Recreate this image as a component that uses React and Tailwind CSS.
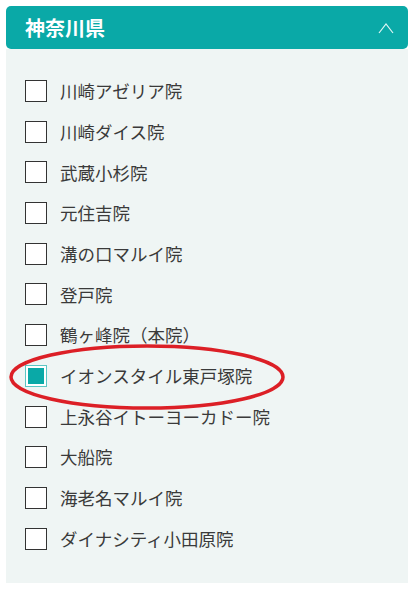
import React, { useState } from 'react';

const CLINICS = [
  '川崎アゼリア院',
  '川崎ダイス院',
  '武蔵小杉院',
  '元住吉院',
  '溝の口マルイ院',
  '登戸院',
  '鶴ヶ峰院（本院）',
  'イオンスタイル東戸塚院',
  '上永谷イトーヨーカドー院',
  '大船院',
  '海老名マルイ院',
  'ダイナシティ小田原院',
];

const CheckBox = ({ checked }) =>
  checked ? (
    <span className="w-[22px] h-[22px] border border-[#5cc6c4] bg-white p-[2px] shrink-0">
      <span className="block w-full h-full bg-[#0aa9a7]" />
    </span>
  ) : (
    <span className="w-[22px] h-[22px] border border-[#333] bg-white shrink-0" />
  );

const App = () => {
  const [selected, setSelected] = useState('イオンスタイル東戸塚院');

  return (
    <div className="w-[414px] h-[589px] bg-white pt-[6px] px-[6px] font-['Noto_Sans_CJK_JP',sans-serif]">
      <div className="flex items-center justify-between h-[43px] px-[19px] bg-[#0aa9a7] rounded-[5px] text-white">
        <span className="text-[20px] font-bold leading-none">神奈川県</span>
        <svg width="16" height="12" viewBox="0 0 16 12" fill="none" className="mr-[-5px]">
          <path d="M1 11 L8 2 L15 11" stroke="#dff6f5" strokeWidth="1.2" />
        </svg>
      </div>

      <div className="relative h-[534px] bg-[#eff5f4] pt-[31px] pl-[19px]">
        <ul className="flex flex-col gap-[18.7px]">
          {CLINICS.map((name) => (
            <li
              key={name}
              onClick={() => setSelected(name)}
              className="flex items-center gap-[13px] h-[22px] cursor-pointer text-[17.5px] text-[#3a3a3a] leading-none"
            >
              <CheckBox checked={selected === name} />
              <span>{name}</span>
            </li>
          ))}
        </ul>

        {/* red marker around the selected clinic */}
        <svg
          className="absolute left-0 top-[293px] pointer-events-none"
          width="290"
          height="70"
          viewBox="0 0 290 70"
        >
          <ellipse cx="141" cy="35" rx="136" ry="31" fill="none" stroke="#dc1f26" strokeWidth="3.5" />
        </svg>
      </div>
    </div>
  );
};

export default App;
